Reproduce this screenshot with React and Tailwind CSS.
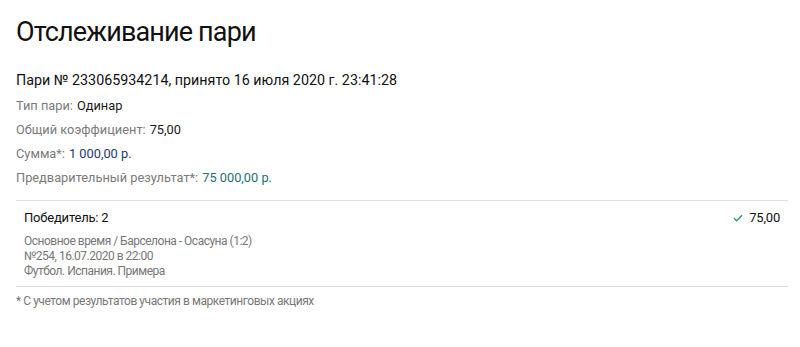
import React from 'react';

const Row = ({ label, value, valueClass = 'text-[#1a1a1a]' }) => (
  <div className="h-6 flex items-center text-[12.8px]">
    <span className="text-[#7a7a7a]">{label}</span>
    <span className={`ml-1 ${valueClass}`}>{value}</span>
  </div>
);

const App = () => {
  return (
    <div className="w-[800px] h-[347px] bg-white px-4 font-['Roboto',sans-serif]">
      {/* Title */}
      <h1 className="pt-[14px] text-[27px] leading-[36px] text-[#111] tracking-[-0.85px]">Отслеживание пари</h1>

      <div className="mt-[20px] text-[14.3px] leading-[20px] text-[#111]">
        Пари № 233065934214, принято 16 июля 2020 г. 23:41:28
      </div>

      <div className="mt-[4px]">
        <Row label="Тип пари:" value="Одинар" />
        <Row label="Общий коэффициент:" value="75,00" />
        <Row label="Сумма*:" value="1 000,00 р." valueClass="text-[#1b3a66]" />
        <Row label="Предварительный результат*:" value="75 000,00 р." valueClass="text-[#1f6f73]" />
      </div>

      {/* Bet event */}
      <div className="mt-[10px] mr-[-4px] border-t border-b border-[#dedede] px-2 pt-[8px] pb-[7px]">
        <div className="flex items-center justify-between text-[13px] leading-[18px] text-[#111] tracking-[-0.2px]">
          <span>Победитель: 2</span>
          <span className="flex items-center gap-[6px]">
            <svg width="10" height="8" viewBox="0 0 10 8" fill="none">
              <path d="M1 4.2 L3.7 6.8 L9 1.2" stroke="#2a9d6e" strokeWidth="1.5" />
            </svg>
            75,00
          </span>
        </div>
        <div className="mt-[7px] text-[12px] leading-[15px] text-[#777] tracking-[-0.5px]">
          <div>Основное время / Барселона - Осасуна (1:2)</div>
          <div>№254, 16.07.2020 в 22:00</div>
          <div>Футбол. Испания. Примера</div>
        </div>
      </div>

      <div className="mt-[7px] text-[12px] leading-[15px] text-[#777] tracking-[-0.45px]">
        * С учетом результатов участия в маркетинговых акциях
      </div>
    </div>
  );
};

export default App;
